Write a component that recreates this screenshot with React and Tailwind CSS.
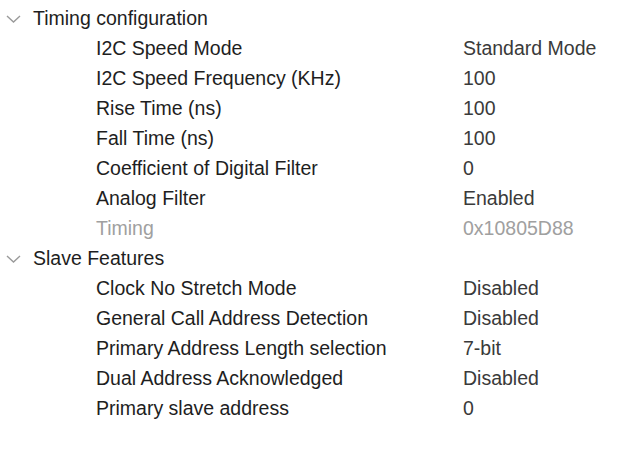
import React from "react";

const sections = [
  {
    title: "Timing configuration",
    rows: [
      ["I2C Speed Mode", "Standard Mode"],
      ["I2C Speed Frequency (KHz)", "100"],
      ["Rise Time (ns)", "100"],
      ["Fall Time (ns)", "100"],
      ["Coefficient of Digital Filter", "0"],
      ["Analog Filter", "Enabled"],
      ["Timing", "0x10805D88", true],
    ],
  },
  {
    title: "Slave Features",
    rows: [
      ["Clock No Stretch Mode", "Disabled"],
      ["General Call Address Detection", "Disabled"],
      ["Primary Address Length selection", "7-bit"],
      ["Dual Address Acknowledged", "Disabled"],
      ["Primary slave address", "0"],
    ],
  },
];

function Chevron() {
  return (
    <svg width="16" height="10" viewBox="0 0 16 10" className="shrink-0">
      <path d="M1 2 L7.5 8 L14 2" fill="none" stroke="#9a9a9a" strokeWidth="1.4" />
    </svg>
  );
}

export default function App() {
  return (
    <div
      className="w-[630px] h-[454px] bg-white pt-[3px] text-[19.5px] leading-[30px] text-[#1e1e1e]"
      style={{ fontFamily: '"Liberation Sans", Arial, sans-serif' }}
    >
      {sections.map((s) => (
        <div key={s.title}>
          <div className="flex items-center h-[30px]">
            <div className="w-[33px] flex justify-start pl-[6px] pt-[1px]">
              <Chevron />
            </div>
            <span>{s.title}</span>
          </div>
          {s.rows.map(([label, value, dis]) => (
            <div key={label} className="flex h-[30px] items-center">
              <div
                className={
                  "pl-[96px] w-[463px] shrink-0 " +
                  (dis ? "text-[#a0a0a0]" : "text-[#1e1e1e]")
                }
              >
                {label}
              </div>
              <div className={dis ? "text-[#a0a0a0]" : "text-[#3a3a3a]"}>{value}</div>
            </div>
          ))}
        </div>
      ))}
    </div>
  );
}
